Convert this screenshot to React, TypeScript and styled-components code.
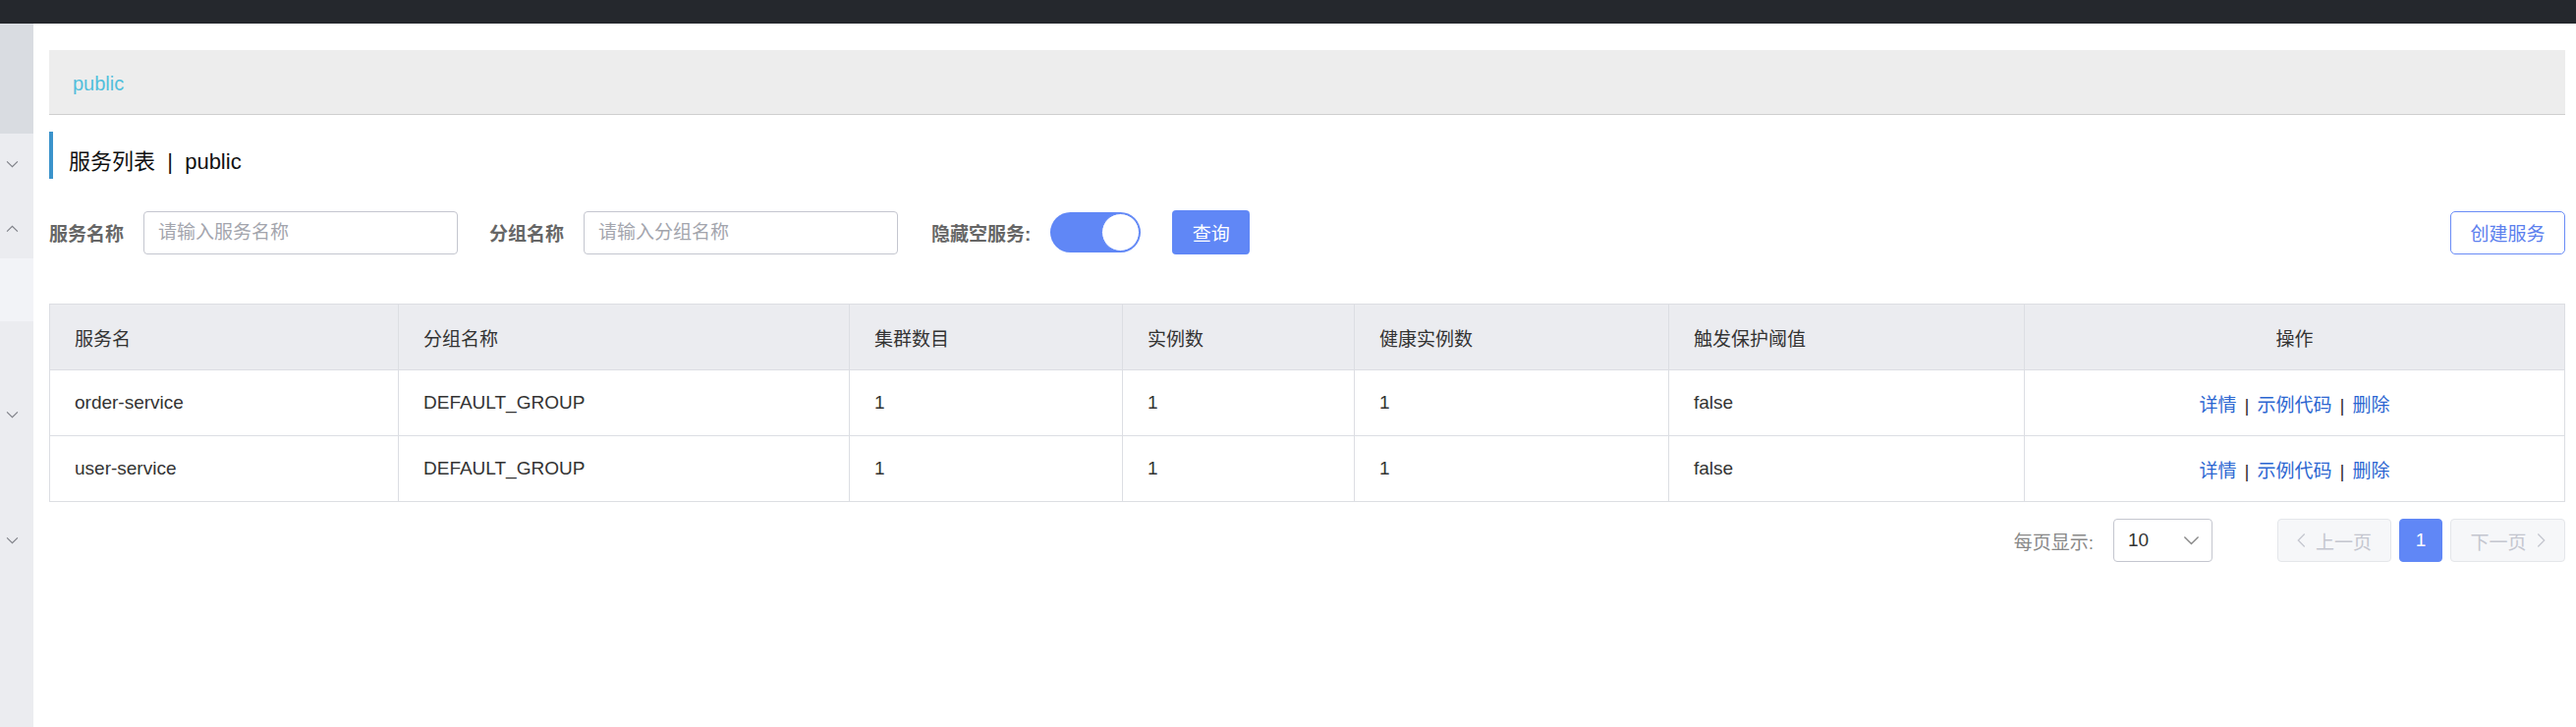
import React from "react";
import styled, { createGlobalStyle } from "styled-components";

const Global = createGlobalStyle`
  html, body { margin: 0; padding: 0; background: #fff; }
  body { font-family: "Liberation Sans", "Noto Sans CJK SC", sans-serif; }
  #root { height: 100vh; }
  * { box-sizing: border-box; }
`;

const Page = styled.div`
  display: flex;
  flex-direction: column;
  height: 740px;
`;

const TopBar = styled.div`
  height: 24px;
  flex: none;
  background: #25282d;
`;

const Body = styled.div`
  display: flex;
  flex: 1;
  min-height: 0;
`;

const Sidebar = styled.div`
  width: 34px;
  flex: none;
  display: flex;
  flex-direction: column;
  background: #ebecf0;
`;

const SideBlock = styled.div<{ $h: number; $bg: string }>`
  height: ${(p) => p.$h}px;
  flex: none;
  background: ${(p) => p.$bg};
  position: relative;
`;

const SideIcon = styled.svg<{ $top: number }>`
  position: absolute;
  left: 6px;
  top: ${(p) => p.$top}px;
  width: 13px;
  height: 8px;
`;

const Main = styled.div`
  flex: 1;
  padding: 27px 12px 0 16px;
  display: flex;
  flex-direction: column;
`;

const Crumb = styled.div`
  height: 66px;
  background: #ededed;
  border-bottom: 1px solid #cfcfcf;
  display: flex;
  align-items: center;
  padding-left: 24px;
  padding-top: 3px;
  font-size: 20px;
  color: #52bfdc;
`;

const Title = styled.div`
  margin-top: 17px;
  height: 48px;
  border-left: 4px solid #3b93cb;
  padding-left: 16px;
  padding-top: 7px;
  display: flex;
  align-items: center;
  font-size: 22px;
  color: #111;
  white-space: pre;
`;

const FilterRow = styled.div`
  margin-top: 32px;
  height: 45px;
  display: flex;
  align-items: center;
`;

const Label = styled.span<{ $ml?: number }>`
  font-size: 19px;
  font-weight: bold;
  color: #666;
  margin-left: ${(p) => p.$ml ?? 0}px;
  margin-right: 20px;
`;

const Input = styled.input`
  width: 320px;
  height: 44px;
  border: 1px solid #c4c6cf;
  border-radius: 4px;
  padding: 0 14px;
  font-size: 19px;
  font-family: inherit;
  outline: none;
  &::placeholder { color: #a3a5ad; }
`;

const Toggle = styled.div`
  width: 92px;
  height: 41px;
  border-radius: 21px;
  background: #6087f6;
  display: flex;
  align-items: center;
  justify-content: flex-end;
  padding-right: 1px;
`;

const Knob = styled.div`
  width: 39px;
  height: 39px;
  border-radius: 50%;
  background: #fff;
  border: 1px solid #6087f6;
`;

const PrimaryButton = styled.button`
  margin-left: 32px;
  width: 79px;
  height: 45px;
  border: none;
  border-radius: 4px;
  background: #6087f6;
  color: #fff;
  font-size: 19px;
  font-family: inherit;
`;

const Spacer = styled.div`
  flex: 1;
`;

const OutlineButton = styled.button`
  width: 117px;
  height: 44px;
  border: 1px solid #6a8cf6;
  border-radius: 5px;
  background: #fff;
  color: #5b80ee;
  font-size: 19px;
  font-family: inherit;
`;

const Table = styled.table`
  margin-top: 50px;
  width: 2560px;
  border-collapse: collapse;
  table-layout: fixed;
  border: 1px solid #dcdee3;
  font-size: 19px;
  color: #333;
`;

const Th = styled.th<{ $center?: boolean }>`
  height: 67px;
  background: #ebecf0;
  font-weight: normal;
  text-align: ${(p) => (p.$center ? "center" : "left")};
  padding: 0 25px;
  border: 1px solid #dcdee3;
  color: #333;
`;

const Td = styled.td<{ $center?: boolean }>`
  height: 67px;
  padding: 0 25px;
  text-align: ${(p) => (p.$center ? "center" : "left")};
  border: 1px solid #dcdee3;
`;

const Link = styled.a`
  color: #2b66d1;
  text-decoration: none;
`;

const Sep = styled.span`
  color: #333;
  margin: 0 8px;
`;

const Pager = styled.div`
  margin-top: 17px;
  height: 44px;
  display: flex;
  align-items: center;
  justify-content: flex-end;
`;

const PagerLabel = styled.span`
  font-size: 19px;
  color: #888;
  margin-right: 20px;
`;

const Select = styled.div`
  width: 101px;
  height: 44px;
  border: 1px solid #c4c6cf;
  border-radius: 4px;
  display: flex;
  align-items: center;
  justify-content: space-between;
  padding: 0 12px 0 14px;
  font-size: 19px;
  color: #333;
  margin-right: 58px;
`;

const PageBtn = styled.div<{ $active?: boolean; $w: number }>`
  width: ${(p) => p.$w}px;
  height: 44px;
  border-radius: 4px;
  display: flex;
  align-items: center;
  justify-content: center;
  gap: 10px;
  font-size: 19px;
  margin-left: 8px;
  background: ${(p) => (p.$active ? "#6087f6" : "#f6f7f9")};
  border: 1px solid ${(p) => (p.$active ? "#6087f6" : "#e4e6ea")};
  color: ${(p) => (p.$active ? "#fff" : "#c4c6cf")};
`;

const Chevron = ({ dir, color, w = 12, h = 7 }: { dir: "up" | "down" | "left" | "right"; color: string; w?: number; h?: number }) => {
  const paths: Record<string, string> = {
    down: "M1 1 L6 6 L11 1",
    up: "M1 6 L6 1 L11 6",
    left: "M6 1 L1 6 L6 11",
    right: "M1 1 L6 6 L1 11",
  };
  const vb = dir === "left" || dir === "right" ? "0 0 7 12" : "0 0 12 7";
  return (
    <svg width={w} height={h} viewBox={vb} fill="none">
      <path d={paths[dir]} stroke={color} strokeWidth="1" />
    </svg>
  );
};

const rows = [
  { name: "order-service", group: "DEFAULT_GROUP", clusters: 1, inst: 1, healthy: 1, thr: "false" },
  { name: "user-service", group: "DEFAULT_GROUP", clusters: 1, inst: 1, healthy: 1, thr: "false" },
];

const widths = [355, 459, 278, 236, 320, 362, 550];

const SideChevron = ({ top, up }: { top: number; up?: boolean }) => (
  <SideIcon $top={top} viewBox="0 0 12 7" fill="none">
    <path d={up ? "M1 6 L6 1 L11 6" : "M1 1 L6 6 L11 1"} stroke="#7d7f86" strokeWidth="1" />
  </SideIcon>
);

export default function App() {
  return (
    <Page>
      <Global />
      <TopBar />
      <Body>
        <Sidebar>
          <SideBlock $h={112} $bg="#d9dce1" />
          <SideBlock $h={127} $bg="#ebecf0">
            <SideChevron top={27} />
            <SideChevron top={93} up />
          </SideBlock>
          <SideBlock $h={64} $bg="#f2f3f7" />
          <SideBlock $h={413} $bg="#ebecf0">
            <SideChevron top={91} />
            <SideChevron top={219} />
          </SideBlock>
        </Sidebar>
        <Main>
          <Crumb>public</Crumb>
          <Title>{"服务列表  |  public"}</Title>
          <FilterRow>
            <Label>服务名称</Label>
            <Input placeholder="请输入服务名称" />
            <Label $ml={32}>分组名称</Label>
            <Input placeholder="请输入分组名称" />
            <Label $ml={34}>隐藏空服务:</Label>
            <Toggle>
              <Knob />
            </Toggle>
            <PrimaryButton>查询</PrimaryButton>
            <Spacer />
            <OutlineButton>创建服务</OutlineButton>
          </FilterRow>
          <Table>
            <colgroup>
              {widths.map((w, i) => (
                <col key={i} style={{ width: w }} />
              ))}
            </colgroup>
            <thead>
              <tr>
                <Th>服务名</Th>
                <Th>分组名称</Th>
                <Th>集群数目</Th>
                <Th>实例数</Th>
                <Th>健康实例数</Th>
                <Th>触发保护阈值</Th>
                <Th $center>操作</Th>
              </tr>
            </thead>
            <tbody>
              {rows.map((r) => (
                <tr key={r.name}>
                  <Td>{r.name}</Td>
                  <Td>{r.group}</Td>
                  <Td>{r.clusters}</Td>
                  <Td>{r.inst}</Td>
                  <Td>{r.healthy}</Td>
                  <Td>{r.thr}</Td>
                  <Td $center>
                    <Link>详情</Link>
                    <Sep>|</Sep>
                    <Link>示例代码</Link>
                    <Sep>|</Sep>
                    <Link>删除</Link>
                  </Td>
                </tr>
              ))}
            </tbody>
          </Table>
          <Pager>
            <PagerLabel>每页显示:</PagerLabel>
            <Select>
              <span>10</span>
              <Chevron dir="down" color="#888" w={17} h={10} />
            </Select>
            <PageBtn $w={116}>
              <Chevron dir="left" color="#c4c6cf" w={9} h={16} />
              上一页
            </PageBtn>
            <PageBtn $w={44} $active>1</PageBtn>
            <PageBtn $w={117}>
              下一页
              <Chevron dir="right" color="#c4c6cf" w={9} h={16} />
            </PageBtn>
          </Pager>
        </Main>
      </Body>
    </Page>
  );
}
